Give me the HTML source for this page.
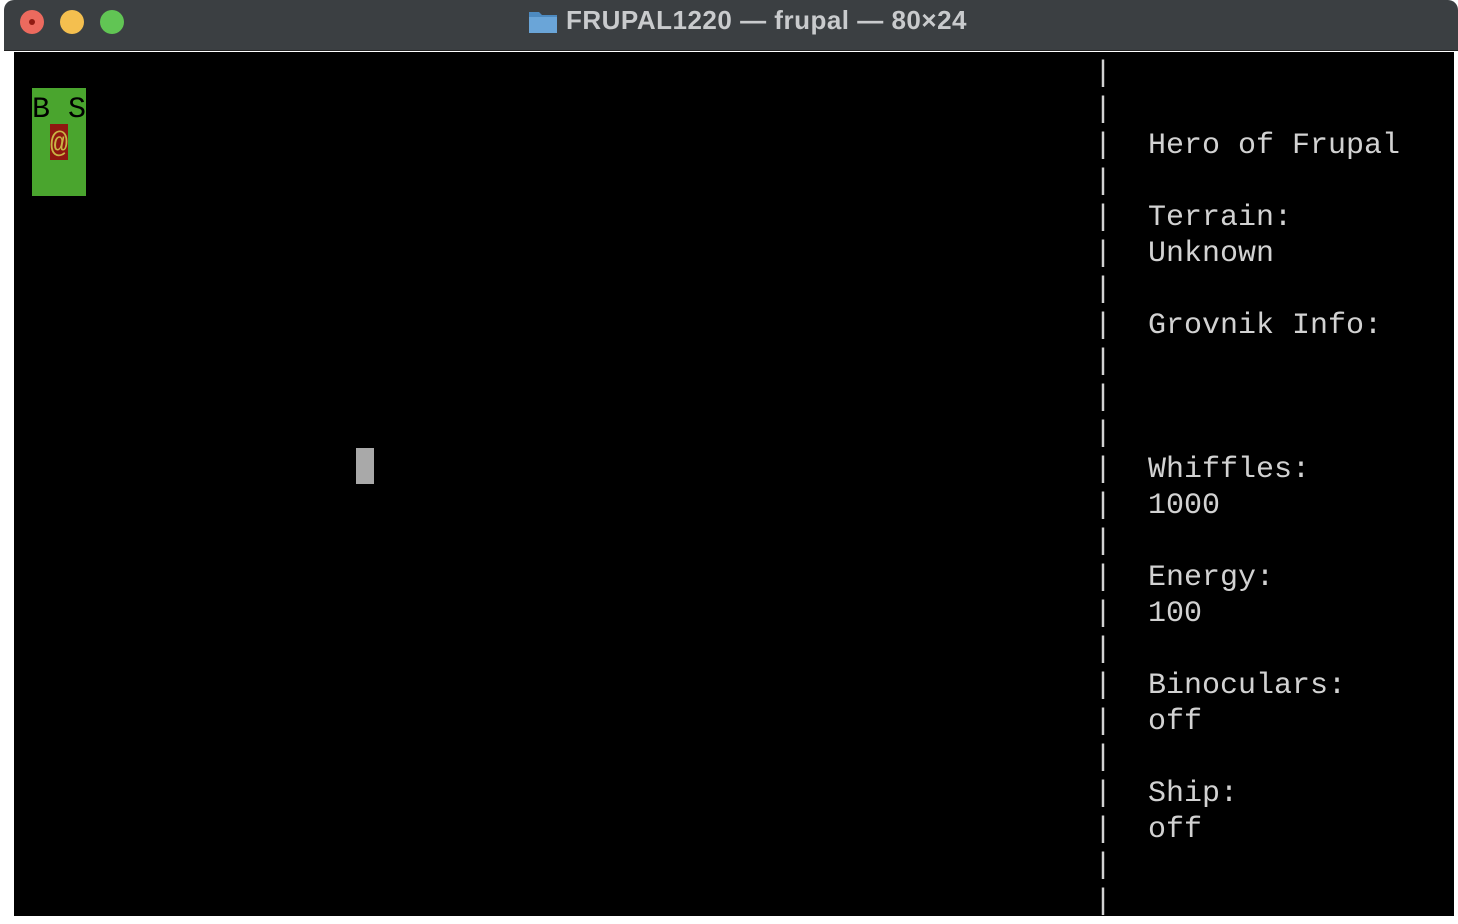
<!DOCTYPE html>
<html><head><style>
body{margin:0;width:1458px;height:924px;background:#fff;position:relative;overflow:hidden;font-family:"Liberation Mono",monospace}
#tb{position:absolute;left:4px;top:0;width:1454px;height:50px;background:#3b3f42;border-radius:10px 10px 0 0;border-bottom:1px solid #222}
.dot{position:absolute;top:10px;width:24px;height:24px;border-radius:50%}
#title{position:absolute;top:5px;font:bold 26px "Liberation Sans",sans-serif;letter-spacing:0.5px;color:#c9cbcd}
#term{position:absolute;left:14px;top:52px;width:1440px;height:864px;background:#000}
.t{position:absolute;font-size:30px;line-height:36px;height:36px;color:#d2d2d2;white-space:pre}
</style></head><body>
<div id="tb">
<div class="dot" style="left:16px;background:#ec6a5e"><div style="position:absolute;left:9px;top:9px;width:6px;height:6px;border-radius:50%;background:#8f1b12"></div></div>
<div class="dot" style="left:56px;background:#f4bf4f"></div>
<div class="dot" style="left:96px;background:#61c554"></div>
<svg style="position:absolute;left:524px;top:8px" width="30" height="26"><path d="M1 4h10l3 3h15v18H1z" fill="#4d8ac0"/><rect x="1" y="9" width="28" height="16" fill="#6aa5d8"/></svg>
<div id="title" style="left:562px">FRUPAL1220 — frupal — 80×24</div>
</div>
<div id="term">
<div style="position:absolute;left:18px;top:36px;width:54px;height:108px;background:#4aa52e"></div>
<div style="position:absolute;left:36px;top:72px;width:18px;height:36px;background:#901810"></div>
<div class="t" style="left:18px;top:40px;color:#000">B S</div>
<div class="t" style="left:36px;top:75px;color:#c9b444">@</div>
<div style="position:absolute;left:342px;top:396px;width:18px;height:36px;background:#a9a9a9"></div>
<div class="t" style="left:1080px;top:4px;height:864px;line-height:36px">|
|
|
|
|
|
|
|
|
|
|
|
|
|
|
|
|
|
|
|
|
|
|
|</div>
<div class="t" style="left:1134px;top:76px">Hero of Frupal</div>
<div class="t" style="left:1134px;top:148px">Terrain:</div>
<div class="t" style="left:1134px;top:184px">Unknown</div>
<div class="t" style="left:1134px;top:256px">Grovnik Info:</div>
<div class="t" style="left:1134px;top:400px">Whiffles:</div>
<div class="t" style="left:1134px;top:436px">1000</div>
<div class="t" style="left:1134px;top:508px">Energy:</div>
<div class="t" style="left:1134px;top:544px">100</div>
<div class="t" style="left:1134px;top:616px">Binoculars:</div>
<div class="t" style="left:1134px;top:652px">off</div>
<div class="t" style="left:1134px;top:724px">Ship:</div>
<div class="t" style="left:1134px;top:760px">off</div>
</div>
</body></html>
